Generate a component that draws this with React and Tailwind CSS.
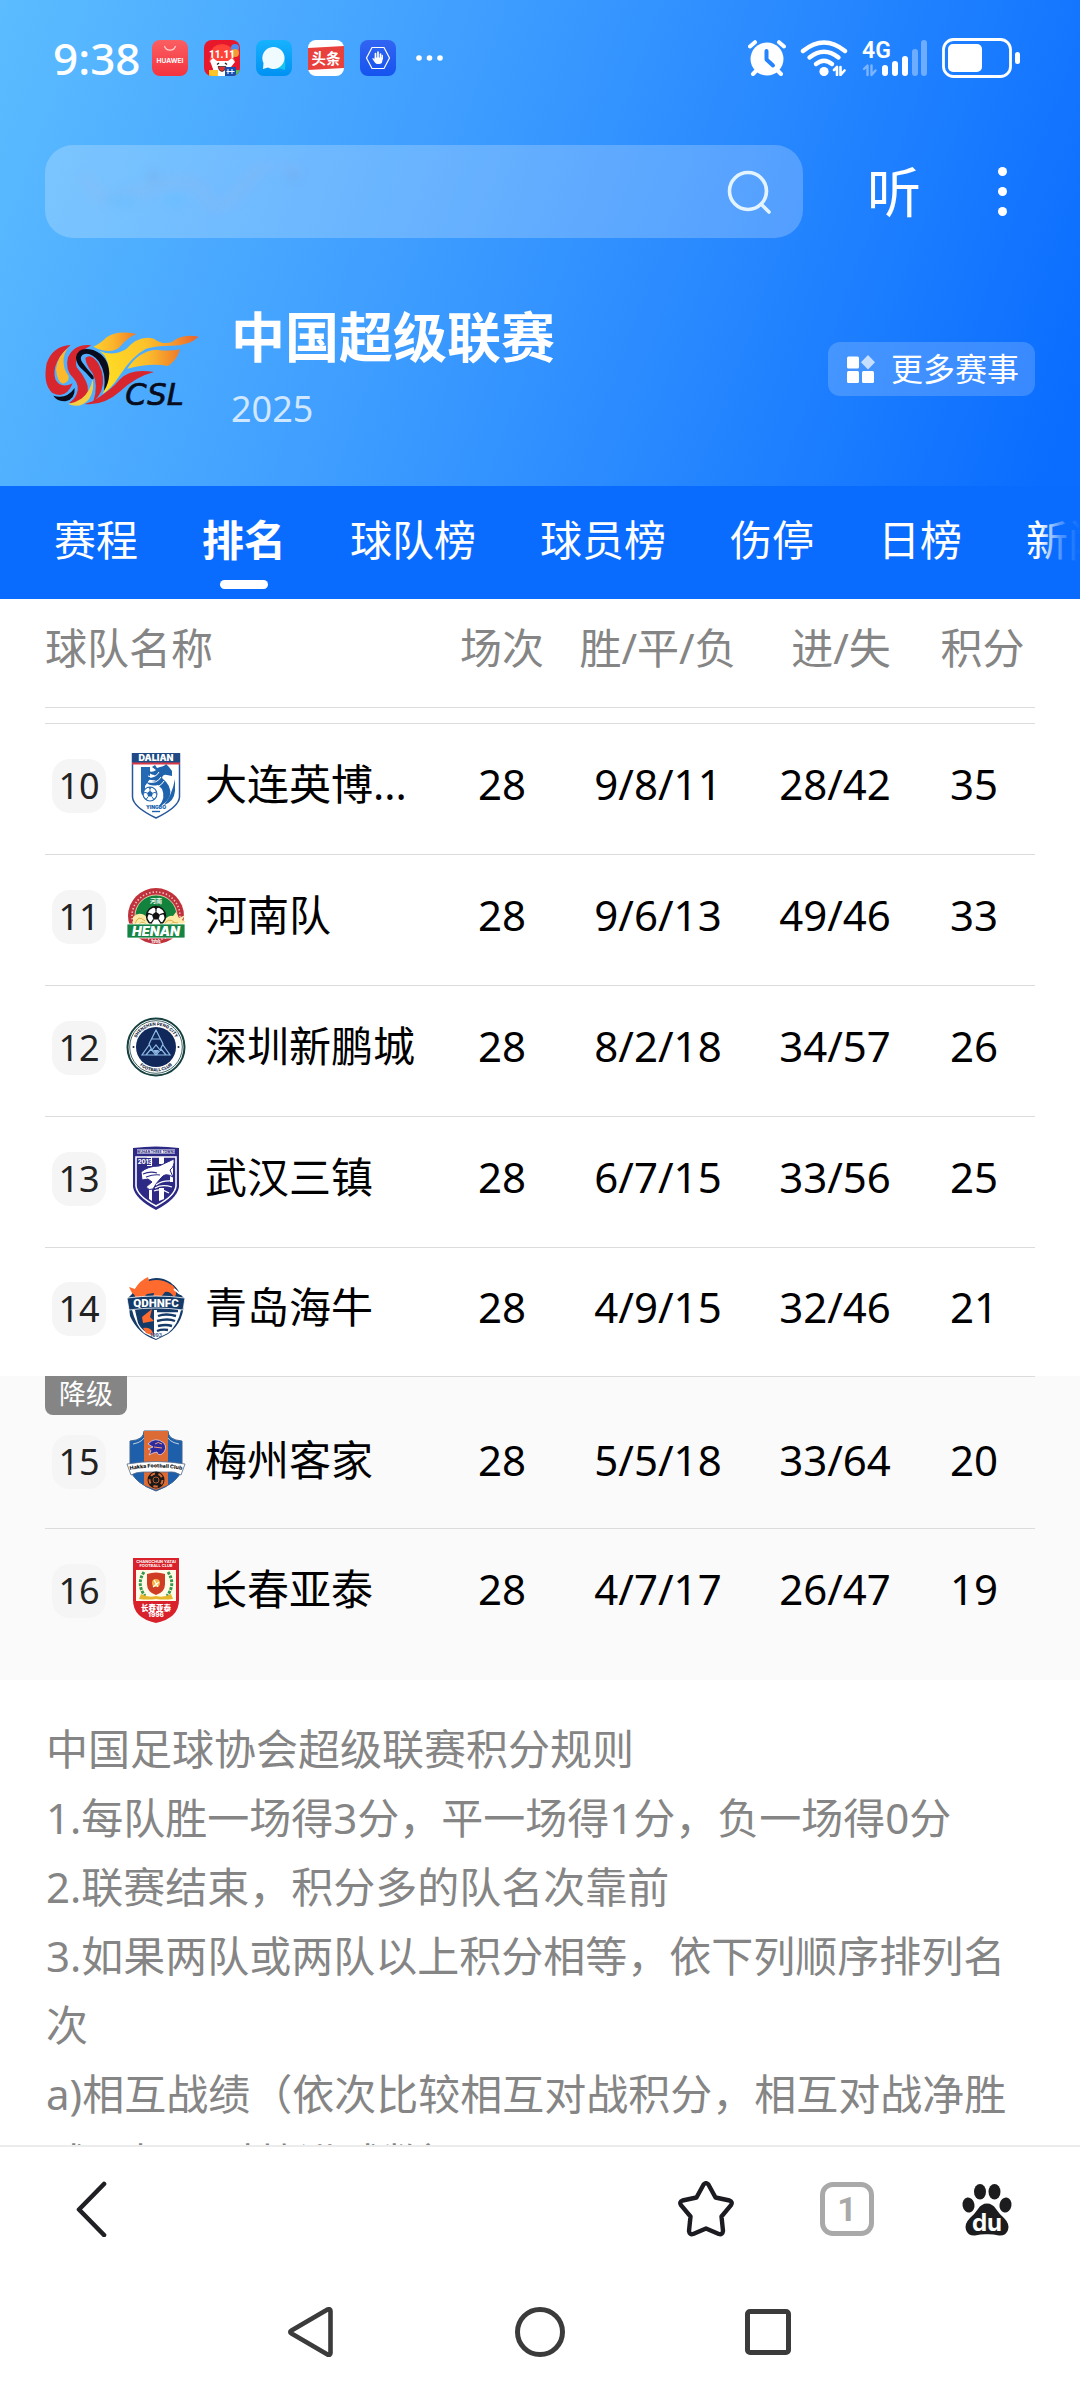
import React from "react";

const sans = "font-['Noto_Sans','Noto_Sans_CJK_SC',sans-serif]";

/* ---------- status bar ---------- */

function HuaweiIcon() {
  return (
    <svg viewBox="0 0 36 36" className="h-9 w-9" aria-label="HUAWEI">
      <defs>
        <linearGradient id="hw" x1="0" y1="0" x2="0" y2="1">
          <stop offset="0" stopColor="#fa5f62" />
          <stop offset="1" stopColor="#f5333f" />
        </linearGradient>
      </defs>
      <rect width="36" height="36" rx="8" fill="url(#hw)" />
      <path d="M12.5 6a5.7 5.7 0 0 0 11 0" fill="none" stroke="#ffd0d0" strokeWidth="1.2" />
      <text x="18" y="23" textAnchor="middle" fontSize="6.6" fontWeight="700" fill="#fff" fontFamily="Inter, sans-serif">HUAWEI</text>
    </svg>
  );
}

function SaleIcon() {
  return (
    <svg viewBox="0 0 36 36" className="h-9 w-9" aria-label="11.11">
      <clipPath id="saleClip"><rect width="36" height="36" rx="8" /></clipPath>
      <g clipPath="url(#saleClip)">
        <rect width="36" height="36" fill="#e8182c" />
        <path d="M7 14Q7 5 18 4Q29 5 29 14L31 22H5Z" fill="#ff4338" />
        <circle cx="31" cy="8" r="4" fill="#4d8df0" />
        <circle cx="31" cy="13" r="4" fill="#f39b34" />
        <path d="M6 21L9 18L13 21H24L28 18L31 22L27 27V36H9V29Z" fill="#fff" />
        <path d="M13 24.5l2-1.5M21 23l2 1.5" stroke="#222" strokeWidth="1.4" fill="none" />
        <path d="M14 26.5h8q-1 5-4 5t-4-5Z" fill="#e5312c" stroke="#222" strokeWidth="0.7" />
        <text x="18" y="18" textAnchor="middle" fontSize="10" fontWeight="800" fill="#fff" fontFamily="Roboto, sans-serif">11.11</text>
        <rect x="5" y="30" width="9" height="6" fill="#ffc629" />
        <rect x="21" y="27" width="11" height="9" fill="#164fae" />
        <path d="M24 29v5M28 29v5M22.5 31.5h8" stroke="#fff" strokeWidth="1" />
        <rect x="32" y="30" width="4" height="6" fill="#5dbb4c" />
      </g>
    </svg>
  );
}

function ChatIcon() {
  return (
    <svg viewBox="0 0 36 36" className="h-9 w-9" aria-hidden="true">
      <defs>
        <linearGradient id="ch" x1="0" y1="0" x2="0" y2="1">
          <stop offset="0" stopColor="#18b2ff" />
          <stop offset="1" stopColor="#0091f2" />
        </linearGradient>
      </defs>
      <rect width="36" height="36" rx="8" fill="url(#ch)" />
      <path d="M16 26Q26 27 28 18Q30 22 29 30L24 28.5Q19 30 16 26Z" fill="#14c5f0" />
      <path d="M17 7A11 11 0 1 1 12 27.5L7 29L7.5 23A11 11 0 0 1 17 7Z" fill="#effbff" />
    </svg>
  );
}

function ToutiaoIcon() {
  return (
    <svg viewBox="0 0 36 36" className="h-9 w-9" aria-label="头条">
      <rect width="36" height="36" rx="8" fill="#fff" />
      <path d="M0 8L36 6V28L0 30Z" fill="#e8403c" />
      <text x="18" y="23.5" textAnchor="middle" fontSize="14.5" fontWeight="700" fill="#fff" fontFamily="'Noto Sans CJK SC', sans-serif">头条</text>
    </svg>
  );
}

function HandIcon() {
  return (
    <svg viewBox="0 0 36 36" className="h-9 w-9" aria-hidden="true">
      <defs>
        <linearGradient id="hd" x1="0" y1="0" x2="0" y2="1">
          <stop offset="0" stopColor="#3264f2" />
          <stop offset="1" stopColor="#1554ef" />
        </linearGradient>
      </defs>
      <rect width="36" height="36" rx="8" fill="url(#hd)" />
      <path d="M12 7.5h12L29.5 18 24 28.5H12L6.5 18Z" fill="none" stroke="#fff" strokeWidth="1.2" />
      <path d="M15.5 19v-5.500M18 18v-6M20.500 19v-5" stroke="#fff" strokeWidth="1.7" strokeLinecap="round" />
      <path d="M14.600 17.500h7.800v3q0 3.500-3.500 3.500h-1q-2 0-3-1.500l-2.800-4q1.500-.8 2.500 1Z" fill="#fff" />
      <path d="M22.300 19v-3.500" stroke="#fff" strokeWidth="1.4" strokeLinecap="round" />
    </svg>
  );
}

function AlarmIcon() {
  return (
    <svg viewBox="0 0 38 36" className="h-9 w-[38px]" fill="none" stroke="#fff" strokeLinecap="round" aria-label="闹钟">
      <circle cx="19" cy="19" r="16.500" fill="#fff" stroke="none" />
      <path d="M2 6.500L7 2.200M36 6.500L31 2.200" strokeWidth="4" />
      <path d="M8 31l-3 3M30 31l3 3" strokeWidth="4" />
      <path d="M18.500 11v8.500l6.500 6" stroke="#2583ff" strokeWidth="4" strokeLinejoin="round" />
    </svg>
  );
}

function WifiIcon() {
  return (
    <svg viewBox="0 0 48 36" className="h-9 w-12" fill="none" stroke="#fff" strokeLinecap="round" aria-label="Wi-Fi">
      <path d="M3 11Q24-6 45 11" strokeWidth="4.4" />
      <path d="M9.500 17.500Q24 6 38.500 17.500" strokeWidth="4.4" />
      <path d="M16 24Q24 17.500 32 24" strokeWidth="4.4" />
      <circle cx="24" cy="31.500" r="4.600" fill="#fff" stroke="none" />
      <path d="M34 30l3-3v8M40.500 27v8l4-4.500" strokeWidth="2.6" strokeLinejoin="round" />
    </svg>
  );
}

function SignalIcon() {
  return (
    <svg viewBox="0 0 66 36" className="h-9 w-[66px] overflow-visible" aria-label="4G">
      <text x="0" y="17.500" fontSize="23" fontWeight="600" fill="#fff" fontFamily="Roboto, sans-serif">4G</text>
      <g fill="none" stroke="#7cb5ff" strokeWidth="2.4" strokeLinecap="round" strokeLinejoin="round">
        <path d="M2 29l3.500-3.500V35M9.500 25.500V35l4-4.500" />
      </g>
      <g fill="#fff">
        <rect x="20" y="25" width="6" height="11" rx="3" />
        <rect x="30" y="21" width="6" height="15" rx="3" />
        <rect x="40" y="16" width="6" height="20" rx="3" />
      </g>
      <g fill="#fff" opacity="0.35">
        <rect x="50" y="9" width="6" height="27" rx="3" />
        <rect x="59" y="0" width="6" height="36" rx="3" />
      </g>
    </svg>
  );
}

function BatteryIcon() {
  return (
    <svg viewBox="0 0 78 40" className="h-10 w-[78px]" aria-label="电量">
      <rect x="1.500" y="1.500" width="67" height="37" rx="10" fill="none" stroke="#fff" strokeWidth="2.8" />
      <rect x="6" y="6" width="34" height="28" rx="5" fill="#fff" />
      <rect x="73" y="14" width="5" height="12" rx="2.500" fill="#fff" />
    </svg>
  );
}

function StatusBar() {
  return (
    <div className="flex h-9 items-center justify-between pl-[53px] pr-[60px]">
      <div className="flex items-center gap-4">
        <span className="-mr-1 text-[44px] leading-[60px] font-medium">9:38</span>
        <HuaweiIcon />
        <SaleIcon />
        <ChatIcon />
        <ToutiaoIcon />
        <HandIcon />
        <svg viewBox="0 0 36 8" className="h-2 w-9" fill="#fff" aria-hidden="true">
          <circle cx="7" cy="4" r="2.800" />
          <circle cx="17.500" cy="4" r="2.800" />
          <circle cx="28" cy="4" r="2.800" />
        </svg>
      </div>
      <div className="flex items-center gap-[14px]">
        <AlarmIcon />
        <WifiIcon />
        <SignalIcon />
        <BatteryIcon />
      </div>
    </div>
  );
}

/* ---------- header ---------- */

function CslLogo() {
  return (
    <svg viewBox="15 9 462 264" className="h-[88px] w-[154px] overflow-visible" aria-label="CSL">
      <defs>
        <linearGradient id="flameMain" x1="170" y1="150" x2="475" y2="60" gradientUnits="userSpaceOnUse">
          <stop offset="0" stopColor="#ffe021" />
          <stop offset="0.5" stopColor="#fcc32b" />
          <stop offset="0.75" stopColor="#f79a2e" />
          <stop offset="1" stopColor="#e9642c" />
        </linearGradient>
        <linearGradient id="flameSide" x1="0" y1="0" x2="1" y2="0">
          <stop offset="0" stopColor="#ffd028" />
          <stop offset="0.45" stopColor="#fbb62c" />
          <stop offset="1" stopColor="#ee7a2a" />
        </linearGradient>
      </defs>
      <path d="M160 80Q180 72 200 52Q230 30 290 42Q265 50 240 80Q212 106 160 80Z" fill="url(#flameSide)" />
      <path d="M172 90Q215 112 258 88Q296 44 342 56Q368 76 396 66Q428 40 476 50Q448 76 400 77Q352 76 318 86Q276 108 240 165Q212 208 188 222Q214 172 204 130Q194 98 172 90Z" fill="url(#flameMain)" />
      <path d="M262 146Q296 92 350 89Q390 95 420 88Q412 120 384 138Q330 128 262 146Z" fill="url(#flameSide)" />
      <path d="M342 156Q272 144 240 178Q212 212 158 244L134 252Q190 258 238 216Q286 170 342 156Z" fill="#d8262e" />
      <path d="M92 75Q38 78 20 130Q8 192 36 218Q78 240 98 190Q62 208 46 178Q32 128 92 75Z" fill="#d8262e" />
      <path d="M84 84Q52 108 48 148Q52 188 68 191Q88 188 86 168Q68 146 71 115Q74 96 84 84Z" fill="#fbb92b" />
      <path d="M154 76Q104 70 84 112Q74 150 100 174Q120 196 110 222Q102 240 88 248Q112 256 132 240Q152 212 138 184Q128 162 110 142Q98 106 154 76Z" fill="#d8262e" />
      <path d="M158 176Q152 214 124 236Q106 248 84 252Q122 268 148 236Q164 210 158 176Z" fill="#f2cf45" />
      <path d="M108 112Q114 78 160 90Q206 108 208 160Q206 194 192 212Q200 160 176 124Q152 94 128 104Q118 112 126 126Q140 146 160 168Q164 182 154 176Q138 158 120 142Q108 128 108 112Z" fill="#080c1c" />
      <path d="M136 114Q154 98 176 132Q198 172 184 212Q174 234 160 244Q176 196 158 160Q138 136 136 114Z" fill="#d8262e" />
      <path d="M40 227Q78 240 104 204Q106 238 76 244Q50 244 40 227Z" fill="#080c1c" />
      <text x="256" y="256" fontSize="92" fontStyle="italic" fill="#080c1c" stroke="#080c1c" strokeWidth="2" fontFamily="'DejaVu Sans', sans-serif">CSL</text>
    </svg>
  );
}

const tabs = ["赛程", "排名", "球队榜", "球员榜", "伤停", "日榜", "新闻"];

function Header() {
  return (
    <header className="text-white">
      <div className="bg-[linear-gradient(110deg,#5cbcff_0%,#3a99ff_45%,#0a6dff_97%)] pt-10 pb-[53px]">
        <StatusBar />
        <div className="mt-[69px] flex items-center pl-[45px] pr-[54px]">
          <form className="relative flex h-[93px] flex-1 items-center rounded-[28px] bg-white/22 pl-9 pr-7" onSubmit={(e) => e.preventDefault()}>
            <input type="search" aria-label="搜索" className="min-w-0 flex-1 bg-transparent text-[42px] outline-none" />
            <svg viewBox="0 0 230 56" className="pointer-events-none absolute left-8 h-14 w-[230px] blur-[4px]" aria-hidden="true">
              <path d="M8 10Q20 40 40 34T90 20T130 34T170 18T220 10" fill="none" stroke="#8fb8ee" strokeWidth="14" opacity="0.25" />
              <ellipse cx="44" cy="36" rx="16" ry="7" fill="#62beff" opacity="0.4" />
              <ellipse cx="98" cy="36" rx="10" ry="7" fill="#62beff" opacity="0.4" />
              <circle cx="76" cy="12" r="6" fill="#6f9fd6" opacity="0.25" />
              <circle cx="216" cy="12" r="6" fill="#6f9fd6" opacity="0.25" />
            </svg>
            <button type="submit" aria-label="搜索" className="h-12 w-12">
              <svg viewBox="0 0 48 48" className="h-12 w-12" fill="none" stroke="#e3f3ff" strokeWidth="3.6" strokeLinecap="round">
                <circle cx="21" cy="23" r="18.500" />
                <path d="M35 37l7 7" />
              </svg>
            </button>
          </form>
          <button type="button" className="ml-16 text-[54px] leading-[60px]">听</button>
          <button type="button" aria-label="更多" className="ml-[57px] flex h-[49px] w-12 flex-col items-center justify-between">
            <span className="h-[9px] w-[9px] rounded-full bg-white" />
            <span className="h-[9px] w-[9px] rounded-full bg-white" />
            <span className="h-[9px] w-[9px] rounded-full bg-white" />
          </button>
        </div>
        <div className="mt-[63px] flex items-center px-[45px]">
          <CslLogo />
          <div className="ml-8 flex-1">
            <h1 className="text-[54px] leading-[72px] font-bold">中国超级联赛</h1>
            <p className="mt-3 text-[36px] leading-[48px] text-white/75">2025</p>
          </div>
          <button type="button" className="mt-1 flex h-[54px] items-center rounded-xl bg-white/18 pl-[19px] pr-4 text-[32px] leading-[54px]">
            <svg viewBox="0 0 28 28" className="mr-4 h-7 w-7" fill="#fff" aria-hidden="true">
              <rect x="0" y="1.500" width="12" height="12" rx="1.500" />
              <rect x="0" y="16" width="12" height="12" rx="1.500" />
              <rect x="15" y="16" width="12" height="12" rx="1.500" />
              <path d="M21 0l7 7.200-7 7.200-7-7.200Z" opacity="0.7" />
            </svg>
            更多赛事
          </button>
        </div>
      </div>
      <nav className="relative flex h-[113px] items-start gap-16 overflow-hidden bg-[#0a6cff] pl-[54px] pt-[22px] text-[42px] leading-[64px] whitespace-nowrap">
        {tabs.map((t) => (
          <a key={t} href={"#" + t} className={t === "排名" ? "flex flex-col items-center font-bold" : ""}>
            {t}
            {t === "排名" && <span className="mt-2 h-[9px] w-12 rounded-full bg-white" />}
          </a>
        ))}
        <span className="pointer-events-none absolute top-0 right-0 h-full w-10 bg-linear-to-r from-[#0a6cff]/0 via-[#0a6cff]/70 to-[#0a6cff]" />
      </nav>
    </header>
  );
}

/* ---------- club crests ---------- */

function Ball({ x, y, r }) {
  return (
    <g transform={`translate(${x} ${y}) scale(${r / 10})`}>
      <circle r="10" fill="#fff" stroke="currentColor" strokeWidth="1.5" />
      <path d="M0-4.500L4.300-1.400 2.600 3.600H-2.600L-4.300-1.400Z" fill="currentColor" />
      <path d="M0-4.500V-9M4.300-1.400L9-3M2.600 3.600L5.500 8M-2.600 3.600L-5.500 8M-4.300-1.400L-9-3" stroke="currentColor" strokeWidth="1.3" />
      <path d="M-3-9.500H3L0-7ZM9.500-4V2L7.500-2ZM-9.500-4V2L-7.500-2ZM3.500 9L8 6 5 6.500ZM-3.500 9L-8 6-5 6.500Z" fill="currentColor" />
    </g>
  );
}

const crests = {
  dalian: (
    <g>
      <path d="M8.500 0.500H55.500V44Q55 54 32 65Q9 54 8.500 44Z" fill="#fff" stroke="#28589c" strokeWidth="1.5" />
      <rect x="8" y="0" width="48" height="10" fill="#1f4a86" />
      <rect x="8" y="9.500" width="48" height="2" fill="#d93a4a" />
      <text x="32" y="8" textAnchor="middle" fontSize="9" fontWeight="900" fill="#fff" fontFamily="Inter, sans-serif">DALIAN</text>
      <path d="M17 14H26V26L21 33V43Q17 43 17 38Z" fill="#2369b4" />
      <path d="M28 14L31 12L33 15L36 14Q41 13 42 11L45 14L48 18L48 23L43 22Q39 21 38 25Q48 33 46 42Q43 51 35 53Q42 45 38 36L34 32Q26 34 22 29Q29 30 32 27Q25 28 22 24Q29 26 31 22Q26 22 24 18Q29 20 32 17Z" fill="#2063ad" />
      <path d="M51 26V38Q50 49 40 52Q48 42 51 26Z" fill="#2063ad" />
      <path d="M24 23Q31 26 35 19M24 29Q33 31 37 24M27 34Q36 35 40 28" fill="none" stroke="#fff" strokeWidth="1" />
      <g color="#2063ad"><Ball x={26} y={41} r={7} /></g>
      <text x="32" y="56" textAnchor="middle" fontSize="5" fontWeight="900" fill="#2063ad" fontFamily="Inter, sans-serif">YINGBO</text>
      <path d="M28 58.500h8" stroke="#2063ad" strokeWidth="1.4" />
    </g>
  ),
  henan: (
    <g>
      <circle cx="32" cy="32" r="28" fill="#c0323b" />
      <circle cx="32" cy="32" r="24" fill="none" stroke="#fff" strokeWidth="1.6" strokeDasharray="1.400 2" opacity="0.7" />
      <circle cx="32" cy="32" r="21" fill="#12823c" stroke="#f7e9c4" strokeWidth="0.8" />
      <text x="32" y="18.500" textAnchor="middle" fontSize="6" fontWeight="700" fill="#fff" fontFamily="'Noto Sans CJK SC', sans-serif">河南</text>
      <path d="M9 42V33Q15 27 22 32L26 42ZM38 42Q42 30 49 32L52 28 55 34 61 31 58 36 62 38 55 42Z" fill="#fbe9a6" />
      <path d="M11 40Q14 30 21 37M15 41Q17 36 22 40M40 41Q44 33 50 38M45 41Q49 37 54 39" fill="none" stroke="#d9a941" strokeWidth="0.9" />
      <g color="#111"><Ball x={32} y={32} r={9.5} /></g>
      <rect x="3" y="40" width="58" height="14" fill="#138443" stroke="#fff" strokeWidth="0.8" />
      <text x="32" y="51.500" textAnchor="middle" fontSize="13" fontWeight="900" fontStyle="italic" fill="#fff" fontFamily="Inter, sans-serif">HENAN</text>
      <text x="32" y="58.500" textAnchor="middle" fontSize="4" fontWeight="700" fill="#fff" fontFamily="Inter, sans-serif">1994</text>
    </g>
  ),
  shenzhen: (
    <g>
      <circle cx="32" cy="32" r="28.500" fill="#fff" stroke="#16403f" strokeWidth="2" />
      <circle cx="32" cy="32" r="26.300" fill="none" stroke="#16403f" strokeWidth="0.8" />
      <path id="szTop" d="M10.500 32A21.500 21.500 0 0 1 53.500 32" fill="none" />
      <path id="szBottom" d="M7.500 32A24.500 24.500 0 0 0 56.500 32" fill="none" />
      <text fontSize="4.3" fontWeight="800" fill="#16293f" fontFamily="Inter, sans-serif"><textPath href="#szTop" startOffset="50%" textAnchor="middle">SHENZHEN PENG CITY</textPath></text>
      <text fontSize="4.3" fontWeight="800" fill="#16293f" fontFamily="Inter, sans-serif"><textPath href="#szBottom" startOffset="50%" textAnchor="middle">FOOTBALL CLUB</textPath></text>
      <circle cx="9.500" cy="32" r="1" fill="#16293f" />
      <circle cx="54.500" cy="32" r="1" fill="#16293f" />
      <circle cx="32" cy="32" r="20" fill="#10285a" />
      <g fill="none" stroke="#8fbbe8" strokeWidth="1.2">
        <path d="M32 15L39 29 36 35 32 30 28 35 25 29ZM28 24H36M25 30L18 40H46L39 30M22 40L27 34 32 40 37 34 42 40" />
      </g>
      <path d="M29 35H35L32 39Z" fill="#8fbbe8" />
    </g>
  ),
  wuhan: (
    <g>
      <path d="M9 2Q32-1 55 2V41Q53 53 32 64Q11 53 9 41Z" fill="#2d2a86" />
      <path d="M12 11H52V40Q51 50 32 60Q13 50 12 40Z" fill="none" stroke="#fff" strokeWidth="1.6" />
      <rect x="13" y="3.500" width="38" height="4" fill="#fff" />
      <text x="32" y="7" textAnchor="middle" fontSize="3.3" fontWeight="800" fill="#2d2a86" fontFamily="Inter, sans-serif">WUHAN THREE TOWNS</text>
      <path d="M23 11h5v9h-5ZM35 11h5v7h-5ZM46 14h3v22h-3ZM35 42h5v11l-5 2ZM25 42h3v13l-3-2Z" fill="#fff" />
      <rect x="15" y="12" width="12" height="7" fill="#2d2a86" />
      <text x="21" y="18" textAnchor="middle" fontSize="6" fontWeight="800" fill="#fff" fontFamily="Inter, sans-serif">2013</text>
      <path d="M17 26Q24 20 35 20L50 13Q51 20 46 24L49 31Q41 26 37 32Q32 37 29 43Q25 45 22 41L28 36L24 33L18 34Z" fill="#fff" stroke="#2d2a86" strokeWidth="1" />
      <path d="M19 28Q26 25 33 27M22 31Q30 28 36 29" stroke="#2d2a86" strokeWidth="1.2" fill="none" />
      <path d="M32 39Q38 34 49 35M31 42Q38 38 48 41M30 45Q37 42 45 47" stroke="#fff" strokeWidth="1.2" fill="none" />
    </g>
  ),
  qingdao: (
    <g>
      <path d="M8 18Q16 3 32 2Q48 2 57 19L60 22Q61 46 44 58L32 64Q14 58 6 40L4 22Z" fill="#143a68" />
      <path d="M8 34Q12 50 20 57L32 63L44 57Q54 49 57 34Z" fill="#fff" />
      <path d="M11 34L14 47Q17 53 22 56L30 60V34Z" fill="#143a68" />
      <path d="M18 41L28 33 26 41 30 45 19 47ZM19 52Q28 50 30 60L22 57Z" fill="#ff6a2e" />
      <path d="M33 35H54M34 40Q42 37 52 40M33 45Q44 42 51 45M34 50Q42 48 48 50M33 55Q38 53 44 54" stroke="#143a68" strokeWidth="2.4" fill="none" />
      <path d="M5 11L11 13Q15 5 24 1L25 5Q37 2 46 8Q53 11 52 19L50 21Q46 15 41 16L36 22H29L30 17L23 18L18 23H11Q12 19 8 17Z" fill="#ff6a2e" />
      <path d="M48 7Q56 10 57 19M50 13L56 18" stroke="#fff" strokeWidth="1.8" fill="none" />
      <path d="M3 22Q32 18 61 22L59 34Q32 30 5 34Z" fill="#143a68" stroke="#fff" strokeWidth="0.8" />
      <text x="32" y="30.500" textAnchor="middle" fontSize="11.500" fontWeight="900" fill="#fff" fontFamily="Roboto, sans-serif">QDHNFC</text>
      <text x="32" y="61" textAnchor="middle" fontSize="5" fontWeight="700" fill="#365a90" fontFamily="Inter, sans-serif">1993</text>
    </g>
  ),
  meizhou: (
    <g>
      <path d="M20 2H44Q44 11 58 12V40Q54 54 32 62Q10 54 6 40V12Q20 11 20 2Z" fill="#1e5fab" stroke="#3e638f" strokeWidth="1" />
      <path d="M9 15Q20 13 22 5M55 15Q44 13 42 5" fill="none" stroke="#e9efe9" strokeWidth="0.8" />
      <path d="M20 2H44V56L32 61 20 56Z" fill="#dc6b35" />
      <path d="M24 15Q31 7 40 14Q44 20 38 25Q34 27 33 23L29 24 25 26Q29 20 24 20L29 18Z" fill="#2c2a9c" stroke="#fff" strokeWidth="0.6" />
      <path d="M31 15q3-3 7 0M30 18l8 1" stroke="#f4a178" strokeWidth="1" fill="none" />
      <path d="M3 35Q32 30 61 35L57 46Q50 42 45 43H19Q12 43 7 46Z" fill="#fff" stroke="#53688a" strokeWidth="0.8" />
      <path id="mzRibbon" d="M6 41Q32 36 58 41" fill="none" />
      <text fontSize="5.3" fontWeight="800" fill="#111" fontFamily="Inter, sans-serif"><textPath href="#mzRibbon" startOffset="50%" textAnchor="middle">Hakka Football Club</textPath></text>
      <circle cx="32" cy="51" r="8.500" fill="#191919" />
      <circle cx="32" cy="51" r="6.500" fill="none" stroke="#dc6b35" strokeWidth="2" strokeDasharray="4.500 3.600" />
      <circle cx="32" cy="51" r="3" fill="#191919" stroke="#dc6b35" strokeWidth="0.8" />
    </g>
  ),
  changchun: (
    <g>
      <path d="M9 0H55V42Q55 60 32 65Q9 60 9 42Z" fill="#d8212b" />
      <text x="32" y="5" textAnchor="middle" fontSize="4" fontWeight="700" fill="#fff" fontFamily="Inter, sans-serif">CHANGCHUN YATAI</text>
      <text x="32" y="9" textAnchor="middle" fontSize="4" fontWeight="700" fill="#fff" fontFamily="Inter, sans-serif">FOOTBALL CLUB</text>
      <rect x="12" y="12" width="40" height="31" fill="#fffbe8" />
      <path d="M23 16Q32 13 41 16V26Q41 34 32 37Q23 34 23 26Z" fill="#cf3d24" />
      <circle cx="32" cy="25" r="4" fill="#f5b547" />
      <path d="M29 29l6-5M30 22l4 7" stroke="#fff" strokeWidth="1.2" />
      <path d="M20 14Q12 26 21 38M44 14Q52 26 43 38" fill="none" stroke="#39984a" strokeWidth="3" strokeDasharray="2.800 1.200" />
      <path d="M17 36Q24 40 32 38Q40 40 47 36L49 41Q40 42 32 41Q24 42 15 41Z" fill="#e8b62c" />
      <text x="32" y="52.500" textAnchor="middle" fontSize="7.500" fontWeight="900" fill="#fff" fontFamily="'Noto Sans CJK SC', sans-serif">长春亚泰</text>
      <text x="32" y="58.500" textAnchor="middle" fontSize="6.500" fontWeight="800" fill="#fff" fontFamily="Inter, sans-serif">1996</text>
    </g>
  ),
};

/* ---------- standings ---------- */

const upper = [
  { rank: 10, crest: "dalian", name: "大连英博...", played: 28, wdl: "9/8/11", goals: "28/42", points: 35 },
  { rank: 11, crest: "henan", name: "河南队", played: 28, wdl: "9/6/13", goals: "49/46", points: 33 },
  { rank: 12, crest: "shenzhen", name: "深圳新鹏城", played: 28, wdl: "8/2/18", goals: "34/57", points: 26 },
  { rank: 13, crest: "wuhan", name: "武汉三镇", played: 28, wdl: "6/7/15", goals: "33/56", points: 25 },
  { rank: 14, crest: "qingdao", name: "青岛海牛", played: 28, wdl: "4/9/15", goals: "32/46", points: 21 },
];

const relegated = [
  { rank: 15, crest: "meizhou", name: "梅州客家", played: 28, wdl: "5/5/18", goals: "33/64", points: 20 },
  { rank: 16, crest: "changchun", name: "长春亚泰", played: 28, wdl: "4/7/17", goals: "26/47", points: 19 },
];

function Columns() {
  return (
    <colgroup>
      <col />
      <col className="w-[148px]" />
      <col className="w-[164px]" />
      <col className="w-[190px]" />
      <col className="w-[105px]" />
    </colgroup>
  );
}

function TeamRow({ team, className }) {
  return (
    <tr className={className}>
      <td className="pb-[10px]">
        <div className="flex items-center pl-[7px]">
          <span className="mt-1 flex h-[54px] w-[54px] items-center justify-center rounded-[18px] bg-[#f5f5f5] text-[36px] leading-[54px] text-[#222]">{team.rank}</span>
          <svg viewBox="0 0 64 66" className="mt-1 ml-[18px] h-[66px] w-16" aria-hidden="true">{crests[team.crest]}</svg>
          <span className="ml-[17px] whitespace-nowrap">{team.name}</span>
        </div>
      </td>
      <td className="pb-[10px]">{team.played}</td>
      <td className="pb-[10px]">{team.wdl}</td>
      <td className="pb-[10px]">{team.goals}</td>
      <td className="pr-[17px] pb-[10px]">{team.points}</td>
    </tr>
  );
}

const tableClass = "w-full table-fixed border-collapse text-center text-[42px] leading-[60px] text-black";

function Standings() {
  return (
    <>
      <section className="px-[45px]">
        <table className={tableClass} aria-label="积分榜">
          <Columns />
          <thead>
            <tr className="h-[108px] border-b border-[#dcdcdc] text-[#858585]">
              <th className="pb-[10px] text-left font-normal">球队名称</th>
              <th className="pb-[10px] font-normal">场次</th>
              <th className="pb-[10px] font-normal">胜/平/负</th>
              <th className="pb-[10px] pl-3 font-normal">进/失</th>
              <th className="pb-[10px] font-normal">积分</th>
            </tr>
            <tr className="h-4 border-b border-[#dcdcdc]"><td colSpan={5} /></tr>
          </thead>
          <tbody>
            {upper.map((t, i) => (
              <TeamRow key={t.rank} team={t} className={i < upper.length - 1 ? "h-[131px] border-b border-[#dcdcdc]" : "h-[129px]"} />
            ))}
          </tbody>
        </table>
      </section>
      <section className="relative bg-[#fafafa] px-[45px] pb-5">
        <h2 className="absolute top-0 left-[45px] h-[39px] rounded-b-lg bg-[#858585] px-[14px] text-[27px] leading-9 text-white">降级</h2>
        <table className={tableClass + " border-t border-[#dcdcdc]"} aria-label="降级区">
          <Columns />
          <tbody>
            <TeamRow team={relegated[0]} className="h-[152px] border-b border-[#dcdcdc] [&>td]:pt-6" />
            <TeamRow team={relegated[1]} className="h-[131px]" />
          </tbody>
        </table>
      </section>
    </>
  );
}

function Rules() {
  return (
    <section className="px-[46px] pt-[34px] text-[42px] leading-[69px] text-[#858585]">
      <p>中国足球协会超级联赛积分规则</p>
      <p>1.每队胜一场得3分，平一场得1分，负一场得0分</p>
      <p>2.联赛结束，积分多的队名次靠前</p>
      <p>3.如果两队或两队以上积分相等，依下列顺序排列名次</p>
      <p>a)相互战绩（依次比较相互对战积分，相互对战净胜球、相互对战进球数）</p>
    </section>
  );
}

/* ---------- bottom bars ---------- */

function Toolbar() {
  return (
    <div className="flex h-[130px] items-center border-t-2 border-[#ececec] bg-white pr-[66px] pb-1 pl-[64px]">
      <button type="button" aria-label="返回" className="mr-auto h-14 w-14">
        <svg viewBox="0 0 56 56" className="h-14 w-14" fill="none" stroke="#1f1f24" strokeWidth="4.6" strokeLinecap="round" strokeLinejoin="round">
          <path d="M40 3L15 28.500 40 54" />
        </svg>
      </button>
      <button type="button" aria-label="收藏" className="h-14 w-14">
        <svg viewBox="0 0 56 56" className="h-14 w-14" fill="none" stroke="#1c1b21" strokeWidth="4.4" strokeLinejoin="round">
          <path d="M25.600 3.500Q28 .8 30.400 3.500L37.500 16.500 51.500 19.500Q55 20.800 53 24.200L43.500 35.500 45 50Q44.500 54 40.800 53L28 47.500 15.200 53Q11.500 54 11 50L12.500 35.500 3 24.200Q1 20.800 4.500 19.500L18.500 16.500Z" />
        </svg>
      </button>
      <button type="button" aria-label="窗口" className="ml-[86px] flex h-[54px] w-[54px] items-center justify-center rounded-[13px] border-[5px] border-[#a9a9a9] font-['Roboto',sans-serif] text-[34px] leading-[44px] font-bold text-[#a9a9a9]">1</button>
      <button type="button" aria-label="百度首页" className="ml-[86px] h-[54px] w-[54px]">
        <svg viewBox="0 0 54 54" className="h-[54px] w-[54px]" fill="#1c1c1e">
          <ellipse cx="8.500" cy="23" rx="6" ry="7.500" transform="rotate(-10 8.500 23)" />
          <ellipse cx="20" cy="9.800" rx="6" ry="7.800" />
          <ellipse cx="34.500" cy="9.800" rx="6" ry="7.800" />
          <ellipse cx="45.500" cy="23" rx="6" ry="7.500" transform="rotate(10 45.500 23)" />
          <path d="M27 21.500Q32.500 21.500 36 27Q39 31.500 44 36Q50 42 48 48Q46 54 39 53.500Q32 52 27 52.300Q22 52 15 53.500Q8 54 6 48Q4 42 10 36Q15 31.500 18 27Q21.500 21.500 27 21.500Z" />
          <text x="27" y="48.500" textAnchor="middle" fontSize="24" fontWeight="700" fill="#fff" fontFamily="Inter, sans-serif">du</text>
        </svg>
      </button>
    </div>
  );
}

function SystemNav() {
  return (
    <div className="flex h-[113px] items-center justify-center gap-[180px] bg-white pr-1">
      <button type="button" aria-label="系统返回" className="h-[50px] w-[50px]">
        <svg viewBox="0 0 50 50" className="h-[50px] w-[50px]" fill="none" stroke="#3b3b3b" strokeWidth="4.6" strokeLinejoin="round">
          <path d="M42.500 2.500Q45.500 1.500 45.500 4V46Q45.500 48.500 42.500 47.500L6.500 26.500Q4 25 6.500 23.500Z" />
        </svg>
      </button>
      <button type="button" aria-label="主屏幕" className="h-[50px] w-[50px] rounded-full border-[5px] border-[#3b3b3b]" />
      <button type="button" aria-label="最近任务" className="h-[46px] w-[46px] rounded-[5px] border-[5px] border-[#3b3b3b]" />
    </div>
  );
}

export default function App() {
  return (
    <div className={"flex h-screen flex-col overflow-hidden bg-white " + sans}>
      <Header />
      <main className="min-h-0 flex-1 overflow-hidden">
        <Standings />
        <Rules />
      </main>
      <footer className="shrink-0">
        <Toolbar />
        <SystemNav />
      </footer>
    </div>
  );
}
